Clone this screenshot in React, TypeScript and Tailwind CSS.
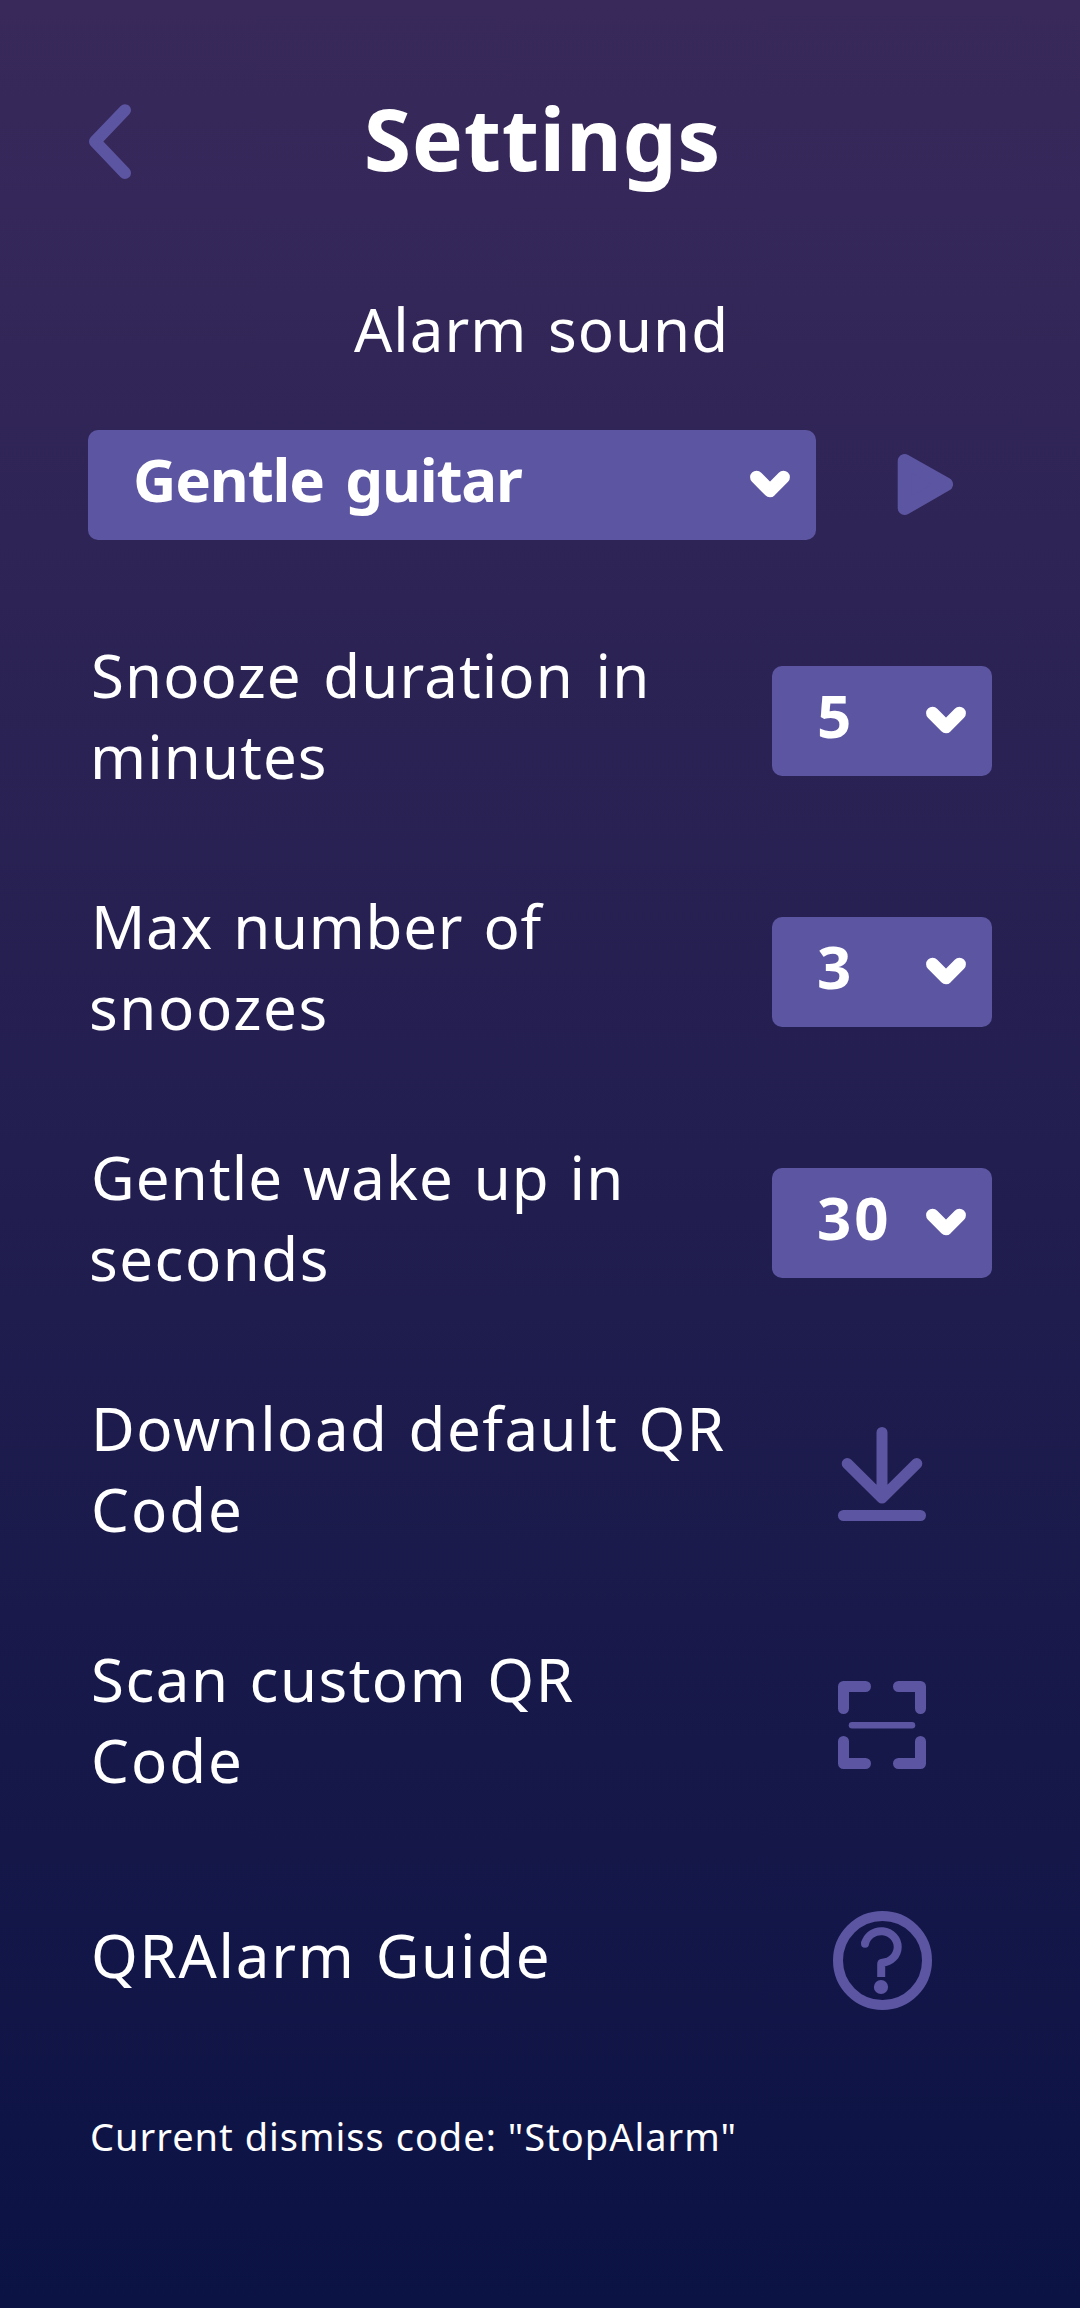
import type { ReactNode } from 'react';

function Chevron() {
  return (
    <svg width="40" height="28" viewBox="0 0 40 28" fill="none" stroke="white" strokeWidth="13" strokeLinecap="round" strokeLinejoin="round" className="mt-[40px] shrink-0">
      <path d="M6.6 7.2 20 20.8 33.4 7.2" />
    </svg>
  );
}

function Select({ value, className }: { value: string; className: string }) {
  return (
    <button className={`flex h-[110px] items-start justify-between rounded-[10px] bg-[#5c55a2] pr-[26px] pl-[45px] ${className}`}>
      <span className="mt-[9px] leading-[81px] font-bold whitespace-nowrap">{value}</span>
      <Chevron />
    </button>
  );
}

function Row({ lines, children }: { lines: { text: string; className: string }[]; children: ReactNode }) {
  return (
    <div className="flex h-[162px] items-start justify-between">
      <div className="flex flex-col pt-[2px] pl-[3px] whitespace-nowrap">
        {lines.map((line) => (
          <span key={line.text} className={line.className}>{line.text}</span>
        ))}
      </div>
      <div className="mt-[33px] flex w-[220px] justify-center">{children}</div>
    </div>
  );
}

function DownloadIcon() {
  return (
    <svg width="110" height="110" viewBox="0 0 110 110" fill="none" stroke="#5c55a2" strokeWidth="11" strokeLinecap="round" strokeLinejoin="round">
      <path d="M55 13.5V78M20.2 44.5 55 79l34.8-34.5" />
      <path d="M16.5 96.5h77" />
    </svg>
  );
}

function ScanIcon() {
  return (
    <svg width="110" height="110" viewBox="0 0 110 110" fill="none" stroke="#5c55a2" strokeWidth="11" strokeLinecap="round" strokeLinejoin="round">
      <path d="M16.5 38.5v-22h22M71.5 16.5h22v22M93.5 71.5v22h-22M38.5 93.5h-22v-22" />
      <path d="M25 55.2h60" strokeWidth="6.5" />
    </svg>
  );
}

function HelpIcon() {
  return (
    <svg width="110" height="110" viewBox="0 0 110 110" fill="none" stroke="#5c55a2">
      <circle cx="55.5" cy="54.5" r="44.5" strokeWidth="10" />
      <path d="M54.2 71V58Q54.2 56.8 55.4 56.7A16.5 15.8 0 1 0 38 38" strokeWidth="8" />
      <circle cx="38" cy="37.8" r="4" fill="#5c55a2" stroke="none" />
      <circle cx="54" cy="81" r="7.1" fill="#5c55a2" stroke="none" />
    </svg>
  );
}

export default function App() {
  return (
    <main className="flex h-[2308px] w-[1080px] flex-col overflow-hidden bg-linear-to-b from-[#39295b] to-[#0b1244] px-[88px] pt-[78px] font-['Noto_Sans',sans-serif] text-[60px] leading-[81px] text-white">
      <header className="grid h-[117px] grid-cols-[44px_1fr_44px]">
        <svg width="44" height="76" viewBox="0 0 44 76" fill="none" stroke="#5c55a2" strokeWidth="12" strokeLinecap="round" strokeLinejoin="round" className="mt-[26px]">
          <path d="M37 6.2 7 37.5 37 69" />
        </svg>
        <h1 className="mt-[1px] pl-[5px] text-center text-[86px] leading-[117px] font-bold tracking-[0.6px]">Settings</h1>
      </header>

      <h2 className="mt-[94px] pl-[3px] text-center tracking-[1px] [word-spacing:4px]">Alarm sound</h2>

      <div className="mt-[60px] flex h-[110px] items-center">
        <Select value="Gentle guitar" className="w-[728px] tracking-[-1.2px] [word-spacing:7px]" />
        <svg width="60" height="68" viewBox="0 0 60 68" fill="#5c55a2" stroke="#5c55a2" strokeWidth="14" strokeLinejoin="round" className="ml-[80px]">
          <path d="M8.7 10v47L50 33.3Z" />
        </svg>
      </div>

      <div className="mt-[93px] flex flex-col gap-[89px]">
        <Row lines={[{ text: 'Snooze duration in', className: 'tracking-[1.1px] [word-spacing:5px]' }, { text: 'minutes', className: '-ml-px tracking-[1.1px]' }]}>
          <Select value="5" className="w-[220px]" />
        </Row>
        <Row lines={[{ text: 'Max number of', className: 'tracking-[0.7px] [word-spacing:4px]' }, { text: 'snoozes', className: '-ml-[2px] tracking-[1.6px]' }]}>
          <Select value="3" className="w-[220px]" />
        </Row>
        <Row lines={[{ text: 'Gentle wake up in', className: 'tracking-[1.1px] [word-spacing:3px]' }, { text: 'seconds', className: '-ml-[2px] tracking-[1.5px]' }]}>
          <Select value="30" className="w-[220px] tracking-[3px]" />
        </Row>
        <Row lines={[{ text: 'Download default QR', className: 'tracking-[1.5px] [word-spacing:3px]' }, { text: 'Code', className: 'tracking-[2px]' }]}>
          <DownloadIcon />
        </Row>
        <Row lines={[{ text: 'Scan custom QR', className: 'tracking-[1.5px] [word-spacing:3px]' }, { text: 'Code', className: 'tracking-[2px]' }]}>
          <ScanIcon />
        </Row>
      </div>

      <div className="mt-[107px] flex h-[110px] items-start justify-between">
        <span className="mt-[9px] pl-[3px] tracking-[1.7px] [word-spacing:3px]">QRAlarm Guide</span>
        <div className="flex w-[220px] justify-center">
          <HelpIcon />
        </div>
      </div>

      <p className="mt-[94px] pl-[2px] text-[38px] leading-[52px] tracking-[1px]">Current dismiss code: &quot;StopAlarm&quot;</p>
    </main>
  );
}
